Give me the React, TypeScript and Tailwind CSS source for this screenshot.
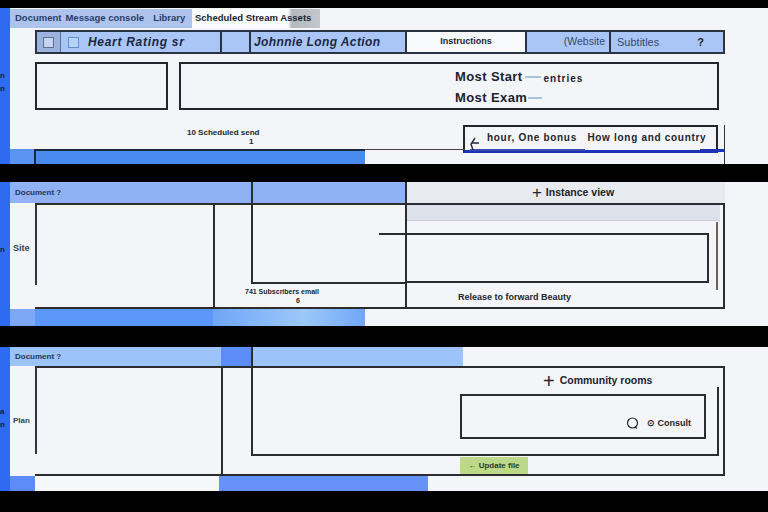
const font = "font-['Liberation_Sans',Arial,sans-serif]";

const Strip = ({ marks, className = '' }: { marks: string[]; className?: string }) => (
  <div className="flex w-[10px] shrink-0 flex-col bg-[#2f6bf0]">
    <div className={`flex flex-1 flex-col items-start justify-center gap-1 overflow-hidden text-[8px] font-bold leading-[9px] text-[#10204a] ${className}`}>
      {marks.map((m, i) => (
        <span key={i}>{m}</span>
      ))}
    </div>
  </div>
);

/* Bloc du haut : onglets, en-tête de table, boîtes */
const TopPanel = () => (
  <section className="flex h-[156px]">
    <Strip marks={['n', 'n']} className="pb-[9px]" />
    <div className="relative flex min-w-0 flex-1 flex-col bg-[#f3f5f8]">
      <div className="mt-px flex h-[19px] shrink-0">
        <div className="flex w-[182px] items-center gap-[4px] bg-[#adc3ec] pl-[5px] text-[9.5px] font-bold whitespace-nowrap text-[#2b3c68]">
          <span>Document</span>
          <span>Message console</span>
          <span className="ml-[5px]">Library</span>
        </div>
        <div className="flex w-[128px] items-center bg-[linear-gradient(90deg,#fbfcfd_0%,#fbfcfd_75%,#b4b8bd_78%,#c4c8cc_100%)] pl-[3px] text-[9.5px] font-bold whitespace-nowrap text-[#20242c]">
          Scheduled Stream Assets
        </div>
      </div>

      <div className="mt-[2px] ml-[25px] flex h-[24px] w-[690px] shrink-0 border-2 border-[#2a3344] bg-[#a9c6f6]">
        <div className="flex w-[24px] items-center justify-center border-r border-[#5a6f98] bg-[#9db2dc]">
          <span className="h-[11px] w-[11px] border border-[#5a6f98] bg-[#c5d3ec]" />
        </div>
        <div className="flex w-[161px] items-center gap-[9px] border-r-2 border-[#2a3344] pl-[7px] text-[12px] font-bold tracking-[0.7px] whitespace-nowrap text-[#1c2740] italic">
          <span className="h-[11px] w-[11px] shrink-0 border border-[#5f8fd0] bg-[#b5d3f5]" />
          Heart Rating sr
        </div>
        <div className="w-[29px] border-r-2 border-[#2a3344]" />
        <div className="flex w-[156px] items-center border-r-2 border-[#2a3344] pl-[3px] text-[12px] font-bold tracking-[0.4px] whitespace-nowrap text-[#1c2740] italic">
          Johnnie Long Action
        </div>
        <div className="flex w-[120px] items-center justify-center border-r-2 border-[#2a3344] bg-[#f8fafc] text-[9px] font-bold text-[#20242c]">
          Instructions
        </div>
        <div className="flex w-[84px] items-center justify-end border-r-2 border-[#2a3344] pr-[4px] text-[10.5px] text-[#3a4770]">
          (Website
        </div>
        <div className="flex flex-1 items-center justify-between pr-[19px] pl-[6px] text-[11px] text-[#3a4770]">
          <span>Subtitles</span>
          <span className="font-bold text-[#20242c]">?</span>
        </div>
      </div>

      <div className="mt-[8px] ml-[25px] flex h-[48px] shrink-0 gap-[11px]">
        <div className="w-[133px] border-2 border-[#23262c]" />
        <div className="flex w-[540px] flex-col justify-center gap-[5px] border-2 border-[#23262c] pl-[274px] text-[13px] font-bold leading-[14px] tracking-[0.4px] text-[#1c2230]">
          <div className="flex items-center">
            <span>Most Start</span>
            <span className="ml-[2px] h-[2px] w-[16px] bg-[#a9c3d8]" />
            <span className="mt-[5px] ml-[3px] text-[10px] tracking-[1px]">entries</span>
          </div>
          <div className="flex items-center">
            <span>Most Exam</span>
            <span className="ml-[1px] h-[2px] w-[14px] bg-[#a9c3d8]" />
          </div>
        </div>
      </div>

      <div className="mt-[15px] ml-[25px] flex h-[43px] w-[690px] items-start border-r border-[#2a3344]">
        <div className="flex h-full w-[428px] flex-col pt-[3px] pl-[152px] text-[8px] font-bold leading-[9px] text-[#23262c]">
          <span className="whitespace-nowrap">10 Scheduled send</span>
          <span className="pl-[62px]">1</span>
        </div>
        <div className="h-[28px] w-[255px] shrink-0 border-2 border-b-[3px] border-[#23262c] border-b-[#1c34b8] pl-[22px] text-[10px] leading-[22px] font-bold tracking-[0.7px] whitespace-nowrap text-[#23262c]">
          hour, One bonus &nbsp;&nbsp;How long and country
        </div>
      </div>

      <div className="absolute bottom-0 left-0 flex h-[15px] w-[355px]">
        <div className="w-[24px] bg-[#5b93f2]" />
        <div className="flex-1 border-t-2 border-l-2 border-[#1c2740] bg-[#4a8bf0]" />
      </div>
      <div className="absolute bottom-[14px] left-[355px] h-px w-[100px] bg-[#4a4040]" />
      <div className="absolute bottom-[12px] left-[690px] h-[3px] w-[25px] bg-[#1c34b8]" />
      <div className="absolute bottom-[13px] left-[460px] h-[2px] w-[115px] bg-[#3a4cb0]" />
      <svg className="absolute top-[128px] left-[459px]" width="14" height="16" viewBox="0 0 14 16" fill="none" stroke="#1c2740" strokeWidth="1.4">
        <path d="M6 2 2 8l2 6M3 7h7" />
      </svg>
    </div>
  </section>
);

/* Bloc du milieu */
const MiddlePanel = () => (
  <section className="mt-[18px] flex h-[144px]">
    <Strip marks={['n']} className="pb-[9px]" />
    <div className="flex min-w-0 flex-1 flex-col bg-[#f3f5f8]">
      <div className="flex h-[21px] shrink-0">
        <div className="flex w-[241px] items-center bg-[#8fb2f5] pl-[5px] text-[8px] font-bold text-[#25345c]">
          Document ?
        </div>
        <div className="w-[154px] border-l-2 border-[#2a2c30] bg-[#8fb2f5]" />
        <div className="flex w-[320px] items-center justify-center gap-[4px] border-l-2 border-[#2a2c30] bg-[#e7eaee] pl-[14px] text-[10.5px] font-bold text-[#20242c]">
          <span className="text-[17px] font-normal leading-none">+</span>
          Instance view
        </div>
      </div>

      <div className="flex h-[106px] shrink-0">
        <div className="flex w-[25px] items-center pb-[15px] pl-[3px] text-[9px] font-bold text-[#2d4a50]">Site</div>
        <div className="flex w-[690px] border-y-2 border-r-2 border-[#2a2c30]">
          <div className="relative w-[180px] border-r-2 border-[#2a2c30]">
            <div className="absolute top-0 left-0 h-[80px] w-[2px] bg-[#33363c]" />
          </div>
          <div className="w-[36px]" />
          <div className="relative flex w-[154px] flex-col">
            <div className="h-[79px] border-b-2 border-l-2 border-[#2a2c30]" />
            <div className="pt-[3px] text-[7px] leading-[9px] font-bold text-[#23262c]">
              <span className="-ml-[6px] block whitespace-nowrap">741 Subscribers email</span>
              <span className="block pl-[45px]">6</span>
            </div>
            <div className="absolute top-[28px] right-0 h-[2px] w-[26px] bg-[#2a2c30]" />
          </div>
          <div className="relative flex flex-1 flex-col border-l-2 border-[#2a2c30]">
            <div className="h-[16px] w-[313px] border-b border-[#c9ced6] bg-[#dde2ea]" />
            <div className="mt-[12px] h-[50px] w-[302px] border-y-2 border-r-2 border-[#2a2c30]" />
            <div className="pt-[8px] pl-[51px] text-[9px] font-bold whitespace-nowrap text-[#23262c]">
              Release to forward Beauty
            </div>
            <div className="absolute top-[17px] right-[5px] h-[68px] w-[2px] bg-[#6b5f58]" />
          </div>
        </div>
      </div>

      <div className="flex h-[17px] shrink-0">
        <div className="w-[25px] bg-[#7ea8f6]" />
        <div className="w-[178px] bg-[#5a97f6]" />
        <div className="w-[152px] bg-[linear-gradient(90deg,#6fa6f6,#9cc8fa_60%,#6fa6f6)]" />
      </div>
    </div>
  </section>
);

/* Bloc du bas */
const BottomPanel = () => (
  <section className="mt-[21px] flex h-[144px]">
    <Strip marks={['a', 'n']} className="pb-[2px]" />
    <div className="flex min-w-0 flex-1 flex-col bg-[#f3f5f8]">
      <div className="flex h-[19px] shrink-0">
        <div className="flex w-[211px] items-center bg-[#9cc4fb] pl-[5px] text-[8px] font-bold text-[#25345c]">
          Document ?
        </div>
        <div className="w-[30px] bg-[#5c8cf8]" />
        <div className="w-[212px] border-l-2 border-[#2a2c30] bg-[#9cc4fb]" />
      </div>

      <div className="flex h-[110px] shrink-0">
        <div className="flex w-[25px] items-center pl-[3px] text-[8px] font-bold text-[#2d4a50]">Plan</div>
        <div className="flex w-[690px] border-y-2 border-r-2 border-[#2a2c30]">
          <div className="relative w-[188px] border-r-2 border-[#2a2c30]">
            <div className="absolute top-0 left-0 h-[86px] w-[2px] bg-[#33363c]" />
          </div>
          <div className="w-[28px]" />
          <div className="relative flex flex-1 flex-col">
            <div className="relative h-[88px] w-[468px] border-b-2 border-l-2 border-[#2a2c30]">
              <div className="mt-[3px] flex h-[20px] items-center gap-[5px] pl-[290px] text-[10.5px] font-bold whitespace-nowrap text-[#20242c]">
                <span className="text-[20px] font-normal leading-none">+</span>
                Community rooms
              </div>
              <div className="mt-[3px] ml-[207px] flex h-[45px] w-[246px] items-end justify-end gap-[7px] border-2 border-[#2a2c30] pr-[13px] pb-[7px] text-[9px] font-bold text-[#20242c]">
                <svg width="14" height="14" viewBox="0 0 14 14" fill="none" stroke="#20242c" strokeWidth="1.2">
                  <circle cx="6.5" cy="7" r="5" />
                  <path d="m9 11 2 1.5" />
                </svg>
                <span>⊙ Consult</span>
              </div>
              <div className="absolute top-[19px] right-0 bottom-0 w-[2px] bg-[#2a2c30]" />
            </div>
            <div className="mt-[1px] ml-[209px] flex h-[17px] w-[68px] items-center justify-center bg-[#bcd98a] text-[8px] font-bold text-[#2d3a25]">
              ← Update file
            </div>
          </div>
        </div>
      </div>

      <div className="flex h-[15px] shrink-0">
        <div className="w-[25px] bg-[#5c8cf8]" />
        <div className="w-[184px] bg-[#f6f7f8]" />
        <div className="w-[209px] bg-[#6692f8]" />
      </div>
    </div>
  </section>
);

export default function App() {
  return (
    <div className={`h-[512px] w-[768px] overflow-hidden bg-black pt-[8px] ${font}`}>
      <TopPanel />
      <MiddlePanel />
      <BottomPanel />
    </div>
  );
}
